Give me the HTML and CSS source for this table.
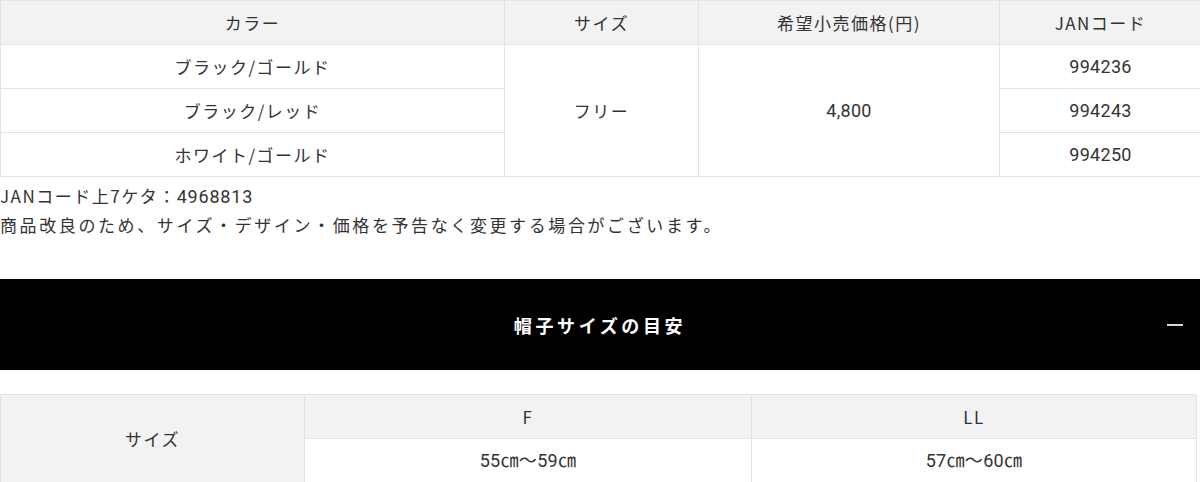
FILE: index.html
```html
<!DOCTYPE html>
<html lang="ja">
<head>
<meta charset="utf-8">
<link rel="stylesheet" href="styles.css">
</head>
<body>
<div class="page">
  <table class="spec">
    <colgroup>
      <col class="c1"><col class="c2"><col class="c3"><col class="c4">
    </colgroup>
    <thead>
      <tr><th>カラー</th><th>サイズ</th><th>希望小売価格(円)</th><th>JANコード</th></tr>
    </thead>
    <tbody>
      <tr><td>ブラック/ゴールド</td><td rowspan="3">フリー</td><td rowspan="3" class="num">4,800</td><td class="num">994236</td></tr>
      <tr><td>ブラック/レッド</td><td class="num">994243</td></tr>
      <tr><td>ホワイト/ゴールド</td><td class="num">994250</td></tr>
    </tbody>
  </table>
  <div class="notes">
    <p>JANコード上7ケタ：<span class="num">4968813</span></p>
    <p class="wide">商品改良のため、サイズ・デザイン・価格を予告なく変更する場合がございます。</p>
  </div>
  <div class="bar">
    <h2 class="bar-title">帽子サイズの目安</h2>
    <span class="bar-toggle"></span>
  </div>
  <table class="size">
    <colgroup>
      <col class="s1"><col class="s2"><col class="s3">
    </colgroup>
    <tr><th rowspan="2">サイズ</th><th>F</th><th>LL</th></tr>
    <tr><td class="num">55㎝～59㎝</td><td class="num">57㎝～60㎝</td></tr>
  </table>
</div>
</body>
</html>
```
FILE: styles.css
```css
html, body {
  margin: 0;
  padding: 0;
  background: #fff;
}
body {
  font-family: "Noto Sans CJK JP", "Noto Sans", sans-serif;
  color: #333;
  font-size: 17px;
}
.page {
  width: 1200px;
  overflow: hidden;
}
table {
  border-collapse: collapse;
  table-layout: fixed;
}
th, td {
  border: 1px solid #e3e3e3;
  text-align: center;
  vertical-align: middle;
  font-weight: 400;
  font-size: 17px;
  letter-spacing: 1.5px;
  padding: 0;
  height: 43px;
  line-height: 20px;
}
th {
  background: #f2f2f2;
}
.spec {
  width: 1201px;
}
.c1 { width: 504px; }
.c2 { width: 194px; }
.c3 { width: 301px; }
.c4 { width: 202px; }
.num {
  font-family: "Roboto", "Noto Sans CJK JP", sans-serif;
  font-size: 18px;
  letter-spacing: 0.3px;
}
.notes {
  padding-top: 5px;
  margin-bottom: 40px;
}
.notes p {
  margin: 0;
  line-height: 28px;
  font-size: 17px;
  letter-spacing: 1.5px;
}
.notes .num {
  letter-spacing: 0.8px;
}
.notes .wide {
  letter-spacing: 2.6px;
}
.bar {
  position: relative;
  background: #000;
  height: 91px;
  display: flex;
  align-items: center;
  justify-content: center;
  margin-bottom: 24px;
}
.bar-title {
  margin: 0;
  color: #fff;
  font-size: 18px;
  font-weight: 700;
  letter-spacing: 3.6px;
}
.bar-toggle {
  position: absolute;
  right: 17px;
  top: 45px;
  width: 16px;
  height: 2px;
  background: #d8d8d8;
}
.size {
  width: 1196px;
}
.s1 { width: 304px; }
.s2 { width: 447px; }
.s3 { width: 445px; }
.size td {
  background: #fff;
}
```
